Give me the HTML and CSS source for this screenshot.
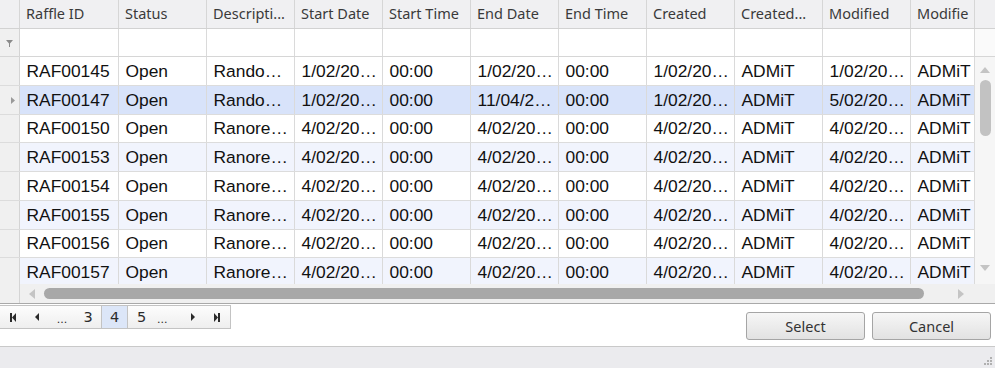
FILE: index.html
```html
<!DOCTYPE html>
<html lang="en">
<head>
<meta charset="UTF-8">
<title>Raffle Lookup</title>
<link rel="stylesheet" href="styles.css">
</head>
<body>
<div class="window">
  <div class="grid">
    <div class="row head">
      <div class="cell ind"></div>
      <div class="cell">Raffle ID</div>
      <div class="cell">Status</div>
      <div class="cell">Descripti...</div>
      <div class="cell">Start Date</div>
      <div class="cell">Start Time</div>
      <div class="cell">End Date</div>
      <div class="cell">End Time</div>
      <div class="cell">Created</div>
      <div class="cell">Created...</div>
      <div class="cell">Modified</div>
      <div class="cell">Modifie</div>
      <div class="cell tail"></div>
    </div>
    <div class="row filter">
      <div class="cell ind">
        <svg width="7" height="7" viewBox="0 0 7 7"><path d="M0 0H7L4 3.5V7H3V3.5Z" fill="#8a8a8a"/></svg>
      </div>
      <div class="cell"></div><div class="cell"></div><div class="cell"></div>
      <div class="cell"></div><div class="cell"></div><div class="cell"></div>
      <div class="cell"></div><div class="cell"></div><div class="cell"></div>
      <div class="cell"></div><div class="cell"></div>
      <div class="cell tail"></div>
    </div>
    <div class="body">
      <div class="body-top">
        <div class="rows">
          <div class="row data">
            <div class="cell ind"></div>
            <div class="cell">RAF00145</div><div class="cell">Open</div><div class="cell">Rando…</div>
            <div class="cell">1/02/20…</div><div class="cell">00:00</div><div class="cell">1/02/20…</div>
            <div class="cell">00:00</div><div class="cell">1/02/20…</div><div class="cell">ADMiT</div>
            <div class="cell">1/02/20…</div><div class="cell">ADMiT</div>
          </div>
          <div class="row data selected">
            <div class="cell ind">
              <svg width="4" height="7" viewBox="0 0 4 7"><path d="M0 0L4 3.5L0 7Z" fill="#9a9a9a"/></svg>
            </div>
            <div class="cell">RAF00147</div><div class="cell">Open</div><div class="cell">Rando…</div>
            <div class="cell">1/02/20…</div><div class="cell">00:00</div><div class="cell">11/04/2…</div>
            <div class="cell">00:00</div><div class="cell">1/02/20…</div><div class="cell">ADMiT</div>
            <div class="cell">5/02/20…</div><div class="cell">ADMiT</div>
          </div>
          <div class="row data">
            <div class="cell ind"></div>
            <div class="cell">RAF00150</div><div class="cell">Open</div><div class="cell">Ranore…</div>
            <div class="cell">4/02/20…</div><div class="cell">00:00</div><div class="cell">4/02/20…</div>
            <div class="cell">00:00</div><div class="cell">4/02/20…</div><div class="cell">ADMiT</div>
            <div class="cell">4/02/20…</div><div class="cell">ADMiT</div>
          </div>
          <div class="row data alt">
            <div class="cell ind"></div>
            <div class="cell">RAF00153</div><div class="cell">Open</div><div class="cell">Ranore…</div>
            <div class="cell">4/02/20…</div><div class="cell">00:00</div><div class="cell">4/02/20…</div>
            <div class="cell">00:00</div><div class="cell">4/02/20…</div><div class="cell">ADMiT</div>
            <div class="cell">4/02/20…</div><div class="cell">ADMiT</div>
          </div>
          <div class="row data">
            <div class="cell ind"></div>
            <div class="cell">RAF00154</div><div class="cell">Open</div><div class="cell">Ranore…</div>
            <div class="cell">4/02/20…</div><div class="cell">00:00</div><div class="cell">4/02/20…</div>
            <div class="cell">00:00</div><div class="cell">4/02/20…</div><div class="cell">ADMiT</div>
            <div class="cell">4/02/20…</div><div class="cell">ADMiT</div>
          </div>
          <div class="row data alt">
            <div class="cell ind"></div>
            <div class="cell">RAF00155</div><div class="cell">Open</div><div class="cell">Ranore…</div>
            <div class="cell">4/02/20…</div><div class="cell">00:00</div><div class="cell">4/02/20…</div>
            <div class="cell">00:00</div><div class="cell">4/02/20…</div><div class="cell">ADMiT</div>
            <div class="cell">4/02/20…</div><div class="cell">ADMiT</div>
          </div>
          <div class="row data">
            <div class="cell ind"></div>
            <div class="cell">RAF00156</div><div class="cell">Open</div><div class="cell">Ranore…</div>
            <div class="cell">4/02/20…</div><div class="cell">00:00</div><div class="cell">4/02/20…</div>
            <div class="cell">00:00</div><div class="cell">4/02/20…</div><div class="cell">ADMiT</div>
            <div class="cell">4/02/20…</div><div class="cell">ADMiT</div>
          </div>
          <div class="row data alt">
            <div class="cell ind"></div>
            <div class="cell">RAF00157</div><div class="cell">Open</div><div class="cell">Ranore…</div>
            <div class="cell">4/02/20…</div><div class="cell">00:00</div><div class="cell">4/02/20…</div>
            <div class="cell">00:00</div><div class="cell">4/02/20…</div><div class="cell">ADMiT</div>
            <div class="cell">4/02/20…</div><div class="cell">ADMiT</div>
          </div>
        </div>
        <div class="vscroll">
          <svg class="arrow" width="10" height="6" viewBox="0 0 10 6"><path d="M0 6L5 0L10 6Z" fill="#c4c4c4"/></svg>
          <div class="vthumb"></div>
          <div class="vspace"></div>
          <svg class="arrow" width="10" height="6" viewBox="0 0 10 6"><path d="M0 0L10 0L5 6Z" fill="#c4c4c4"/></svg>
        </div>
      </div>
      <div class="body-bottom">
        <div class="ind-foot"></div>
        <div class="hscroll">
          <svg width="6" height="10" viewBox="0 0 6 10"><path d="M6 0L0 5L6 10Z" fill="#c4c4c4"/></svg>
          <div class="hthumb"></div>
          <svg width="6" height="10" viewBox="0 0 6 10"><path d="M0 0L6 5L0 10Z" fill="#c4c4c4"/></svg>
        </div>
        <div class="corner"></div>
      </div>
    </div>
  </div>

  <div class="bottom">
    <div class="pager">
      <span class="pg first">
        <svg width="6" height="9" viewBox="0 0 6 9"><path d="M0 0H2V9H0Z M6 0L2 4.5L6 9Z" fill="#2b2b2b"/></svg>
      </span>
      <span class="pg icon">
        <svg width="4" height="8" viewBox="0 0 4 8"><path d="M4 0L0 4L4 8Z" fill="#2b2b2b"/></svg>
      </span>
      <span class="pg dots">...</span>
      <span class="pg num sep">3</span>
      <span class="pg num current sep">4</span>
      <span class="pg num">5</span>
      <span class="pg dots after">...</span>
      <span class="pg icon">
        <svg width="4" height="8" viewBox="0 0 4 8"><path d="M0 0L4 4L0 8Z" fill="#2b2b2b"/></svg>
      </span>
      <span class="pg icon">
        <svg width="6" height="9" viewBox="0 0 6 9"><path d="M0 0L4 4.5L0 9Z M4 0H6V9H4Z" fill="#2b2b2b"/></svg>
      </span>
    </div>
    <div class="actions">
      <button class="btn">Select</button>
      <button class="btn">Cancel</button>
    </div>
  </div>

  <div class="status">
    <svg class="grip" width="9" height="9" viewBox="0 0 9 9">
      <rect x="7" y="1" width="2" height="2" fill="#b0b0b0"/>
      <rect x="4" y="4" width="2" height="2" fill="#b0b0b0"/>
      <rect x="7" y="4" width="2" height="2" fill="#b0b0b0"/>
      <rect x="1" y="7" width="2" height="2" fill="#b0b0b0"/>
      <rect x="4" y="7" width="2" height="2" fill="#b0b0b0"/>
      <rect x="7" y="7" width="2" height="2" fill="#b0b0b0"/>
    </svg>
  </div>
</div>
</body>
</html>
```

FILE: styles.css
```css
body {
  margin: 0;
  padding: 0;
  background-color: #ffffff;
  font-family: "Liberation Sans", Arial, sans-serif;
}
.window {
  width: 995px;
  height: 368px;
  display: flex;
  flex-direction: column;
  overflow: hidden;
}
.grid {
  height: 304px;
  border-bottom: 1px solid #a9a9a9;
  box-sizing: border-box;
  display: flex;
  flex-direction: column;
}
.row {
  display: grid;
  grid-template-columns: 20px 99px repeat(9, 88px) 64px;
  box-sizing: border-box;
}
.cell {
  box-sizing: border-box;
  border-right: 1px solid #dadada;
  padding-left: 6px;
  white-space: nowrap;
  overflow: hidden;
  display: flex;
  align-items: center;
}
.cell.ind {
  padding-left: 0;
  justify-content: center;
  background-color: #f0f0f0;
  border-right: 1px solid #d4d4d4;
}
.head {
  grid-template-columns: 20px 99px repeat(9, 88px) 64px 20px;
  height: 29px;
  background-color: #f0f0f2;
  border-bottom: 1px solid #d2d2d2;
  font-family: "Noto Sans", "Open Sans", sans-serif;
  font-size: 14.5px;
  color: #3a3a3a;
}
.head .cell {
  border-right-color: #d6d6d6;
  padding-bottom: 2px;
}
.head .cell.ind {
  background-color: #f0f0f2;
}
.head .tail {
  border-right: none;
}
.filter {
  grid-template-columns: 20px 99px repeat(9, 88px) 64px 20px;
  height: 28px;
  border-bottom: 1px solid #d6d6d6;
}
.filter .cell.ind {
  align-items: flex-start;
  padding-top: 11px;
}
.filter .tail {
  border-right: none;
  background-color: #fafafa;
}
.body {
  flex: 1;
  display: flex;
  flex-direction: column;
}
.body-top {
  height: 227px;
  display: flex;
}
.rows {
  width: 975px;
  overflow: hidden;
}
.data {
  height: 28.75px;
  border-bottom: 1px solid #dcdcdc;
  font-size: 17.4px;
  color: #111111;
}
.data .cell {
  padding-left: 6.5px;
  padding-top: 1px;
}
.data.alt {
  background-color: #f1f4fd;
}
.data.selected {
  background-color: #d8e3fa;
}
.data.alt .cell.ind,
.data.selected .cell.ind {
  background-color: #f0f0f0;
}
.vscroll {
  width: 20px;
  background-color: #f6f6f6;
  display: flex;
  flex-direction: column;
  align-items: center;
  padding: 10px 0 13px;
  box-sizing: border-box;
}
.vthumb {
  width: 11px;
  height: 56px;
  margin-top: 7px;
  border-radius: 6px;
  background-color: #c2c2c2;
}
.vspace {
  flex: 1;
}
.body-bottom {
  flex: 1;
  display: flex;
}
.ind-foot {
  width: 20px;
  background-color: #f0f0f0;
  border-right: 1px solid #d4d4d4;
  box-sizing: border-box;
}
.hscroll {
  width: 955px;
  background-color: #f0f0f0;
  display: flex;
  align-items: center;
  padding: 0 11px 0 9px;
  box-sizing: border-box;
}
.hthumb {
  flex: 1;
  height: 11px;
  margin: 0 34px 0 9px;
  border-radius: 6px;
  background-color: #a8a8a8;
}
.corner {
  width: 20px;
  background-color: #f0f0f0;
}
.bottom {
  height: 43px;
  display: flex;
  justify-content: space-between;
  align-items: flex-start;
  border-bottom: 1px solid #c9c9c9;
  box-sizing: border-box;
}
.pager {
  margin-top: 1px;
  height: 24px;
  width: 231px;
  border: 1px solid #c3c3c3;
  border-left: none;
  box-sizing: border-box;
  background: linear-gradient(#fdfdfd, #eeeeee);
  display: flex;
  align-items: stretch;
  font-family: "DejaVu Sans", sans-serif;
  font-size: 14.5px;
  color: #2b2b2b;
}
.pg {
  display: flex;
  align-items: center;
  justify-content: center;
  box-sizing: border-box;
}
.pg.first {
  width: 25px;
}
.pg.icon {
  width: 24px;
}
.pg.dots {
  width: 26px;
  font-size: 11px;
  padding-top: 5px;
}
.pg.dots.after {
  width: 26px;
  justify-content: flex-start;
  padding-left: 2px;
}
.pg.num {
  width: 27px;
}
.pg.num.current {
  width: 26px;
  background-color: #dce6f8;
}
.pg.sep {
  border-right: 1px solid #c3c3c3;
}
.actions {
  align-self: center;
  display: flex;
  gap: 7px;
  margin-right: 4px;
  margin-top: 1px;
}
.btn {
  width: 119px;
  height: 28px;
  border: 1px solid #a5a5a5;
  border-radius: 3px;
  background: linear-gradient(#f6f6f6, #e2e2e2);
  font-family: "Noto Sans", "Open Sans", sans-serif;
  font-size: 14.5px;
  color: #333333;
  padding: 0;
}
.status {
  flex: 1;
  background-color: #ebebee;
  display: flex;
  justify-content: flex-end;
  align-items: flex-end;
  padding: 0 3px 3px 0;
}
```
